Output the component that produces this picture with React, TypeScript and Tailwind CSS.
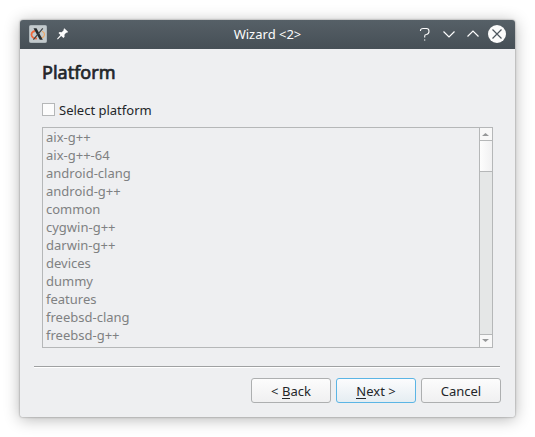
import React from "react";

const platforms = [
  "aix-g++",
  "aix-g++-64",
  "android-clang",
  "android-g++",
  "common",
  "cygwin-g++",
  "darwin-g++",
  "devices",
  "dummy",
  "features",
  "freebsd-clang",
  "freebsd-g++",
];

function XLogo() {
  return (
    <svg width="18" height="18" viewBox="0 0 18 18" className="ml-[9px] -mt-px">
      <rect x="0.5" y="0.5" width="17" height="17" rx="1" fill="#c3cacd" stroke="#aeb7bb" />
      <path d="M6 6C3.200 6.500 1.800 8.500 2.800 11c.9 2 3.200 2.700 5.200 2.400" fill="none" stroke="#f2683a" strokeWidth="1.800" />
      <path d="M10.500 13.400c2.900-.3 4.900-1.900 5-4.100 0-1.400-.9-2.500-2.500-3.100" fill="none" stroke="#eda765" strokeWidth="1.200" />
      <path d="M4.500 3.300h3l6.300 11.400h-3z" fill="#262a2c" />
      <path d="M13.800 3.300 4.400 14.700" stroke="#3b3f41" strokeWidth="1.200" fill="none" />
    </svg>
  );
}

function Pin() {
  return (
    <svg width="12" height="12" viewBox="0 0 12 12" className="-mt-px ml-[10px]">
      <path d="M7.300.2 11 3.800 10 4.900 9.300 4.600 7.400 6.800 7.600 8.800 6.500 9.900 4.200 7.900 1 11.200.2 11.300.2 10.600 3.400 7.100 1.500 5 2.600 3.900 4.700 4.200 6.900 2 6.500 1.200z" fill="#fcfcfc" />
    </svg>
  );
}

function TitleBar() {
  return (
    <div className="grid h-[29px] shrink-0 grid-cols-[1fr_auto_1fr] items-center bg-linear-to-b from-[#566067] to-[#464f56] text-[#fcfcfc]">
      <div className="flex items-center">
        <XLogo />
        <Pin />
      </div>
      <span className="text-[13px] leading-[29px]">Wizard &lt;2&gt;</span>
      <svg width="92" height="20" viewBox="0 0 92 20" className="-mt-px mr-[8px] justify-self-end" fill="none" stroke="#fcfcfc">
        <path d="M5.500 7V6Q6 4.500 8 4.500H11.500Q14 4.500 14 7.200T11.500 10.500Q9.700 10.500 9.700 12V13.500M9 16h1.300" strokeWidth="1.100" />
        <path d="M28.500 7.500 34 13 39.500 7.500M52.500 12.500 58 7 63.500 12.500" strokeWidth="1.200" />
        <circle cx="82" cy="10" r="9" fill="#fcfcfc" stroke="none" />
        <path d="M77.500 5.500 86.500 14.500M86.500 5.500 77.500 14.500" stroke="#4d565d" strokeWidth="1.200" />
      </svg>
    </div>
  );
}

function ScrollBar() {
  return (
    <div className="flex w-[13px] flex-col border-l border-[#b5b7b8] bg-[#e5e7e7]">
      <div className="flex h-[12px] items-center justify-center bg-[#f8f8f8]">
        <svg width="7" height="3" viewBox="0 0 7 3" className="mr-px"><path d="M0 3 3.500 0 7 3z" fill="#969899" /></svg>
      </div>
      <div className="h-[32px] border-y border-[#b5b7b8] bg-linear-to-r from-[#fdfdfd] to-[#f1f1f2]" />
      <div className="flex-1" />
      <div className="flex h-[13px] items-center justify-center border-t border-[#b5b7b8] bg-[#f8f8f8]">
        <svg width="7" height="3" viewBox="0 0 7 3" className="mr-px mb-px"><path d="M0 0 3.500 3 7 0z" fill="#969899" /></svg>
      </div>
    </div>
  );
}

function Button({ children, primary = false }: { children: React.ReactNode; primary?: boolean }) {
  return (
    <button
      className={
        "h-[25px] w-[80px] rounded-[3px] border bg-linear-to-b text-center text-[13px] leading-[25px] text-[#232629] " +
        (primary ? "border-[#5bb5e5] from-[#fcfcfd] to-[#e5edf2]" : "border-[#adafb0] from-[#fcfcfc] to-[#f0f0f1]")
      }
    >
      {children}
    </button>
  );
}

function Mnemonic({ children }: { children: string }) {
  return <span className="mt-[3px] inline-block h-[17px] border-b border-[#232629] align-top leading-[19px]">{children}</span>;
}

export default function App() {
  return (
    <main className="h-[437px] w-[535px] overflow-hidden bg-white p-5 font-['Noto_Sans',sans-serif] text-[13px] text-[#232629]">
      <section className="flex h-[397px] w-[495px] flex-col overflow-hidden rounded-t-[3px] rounded-b-[2px] bg-[#eeeff1] shadow-[0_0_2px_rgba(0,0,0,0.45),0_2px_16px_rgba(0,0,0,0.3)]">
        <TitleBar />
        <h1 className="mt-[11px] ml-[22px] text-[18px] leading-[25px] font-normal [-webkit-text-stroke:0.7px_#232629]">Platform</h1>
        <label className="mt-[16px] ml-[22px] flex h-[18px] items-center">
          <span className="-mt-px h-[13px] w-[13px] border border-[#b5b7b8] bg-[#fcfcfc]" />
          <span className="ml-1 leading-[18px]">Select platform</span>
        </label>
        <div className="mt-[8px] ml-[22px] flex h-[221px] w-[451px] shrink-0 border border-[#b5b7b8]">
          <ul className="flex-1 overflow-hidden pl-[3px] text-[#7f8182]">
            {platforms.map((name) => (
              <li key={name} className="h-[18px] leading-[18px]">{name}</li>
            ))}
          </ul>
          <ScrollBar />
        </div>
        <div className="mt-[18px] ml-[14px] h-[2px] w-[466px] border-b border-white bg-[#9fa1a2]" />
        <div className="mt-[10px] flex gap-[5px] pl-[231px]">
          <Button>&lt; <Mnemonic>B</Mnemonic>ack</Button>
          <Button primary><Mnemonic>N</Mnemonic>ext &gt;</Button>
          <Button>Cancel</Button>
        </div>
      </section>
    </main>
  );
}
